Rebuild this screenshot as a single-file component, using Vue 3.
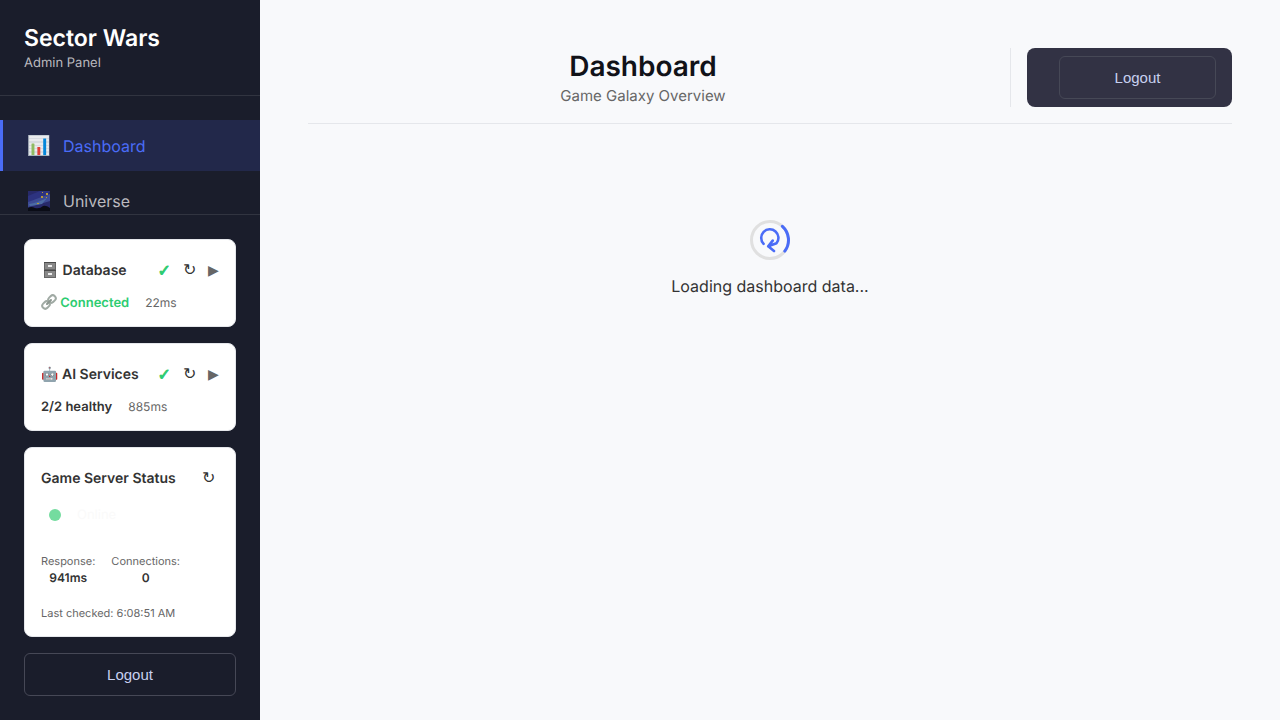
<script setup>
const navItems = [
  { icon: 'chart', label: 'Dashboard', active: true },
  { icon: 'galaxy', label: 'Universe', active: false },
]

const services = [
  { icon: 'cabinet', name: 'Database', linked: true, state: 'Connected', ok: true, time: '22ms' },
  { icon: 'robot', name: 'AI Services', linked: false, state: '2/2 healthy', ok: false, time: '885ms' },
]

const metrics = [
  { label: 'Response:', value: '941ms' },
  { label: 'Connections:', value: '0' },
]
</script>

<template>
  <div class="layout">
    <aside class="sidebar">
      <header class="brand">
        <h2>Sector Wars</h2>
        <p>Admin Panel</p>
      </header>

      <nav class="nav">
        <a v-for="item in navItems" :key="item.label" href="#" class="nav-link" :class="{ active: item.active }">
          <span class="nav-icon">
            <template v-if="item.icon === 'chart'">📊</template>
            <svg v-else class="galaxy" viewBox="0 0 22 20" aria-hidden="true">
              <rect width="22" height="20" fill="#292b70" />
              <path d="M0 5L12 0H22L17 7L0 13Z" fill="#30368a" />
              <path d="M0 11Q8 8 22 3V10Q10 14 0 16Z" fill="#4150a0" />
              <path d="M1 13Q9 12 19 7L14 13L2 15Z" fill="#5274b0" />
              <path d="M0 17Q3 15 7 17Q12 18 15 15Q18 14 22 17V20H0Z" fill="#090b14" />
              <g fill="#c9a83a">
                <rect x="13" y="5" width="2" height="2" />
                <rect x="18" y="2" width="2" height="2" />
                <rect x="9" y="12" width="2" height="1" />
                <rect x="14" y="1" width="1" height="1" />
                <rect x="18" y="6" width="1" height="1" />
              </g>
            </svg>
          </span>
          <span>{{ item.label }}</span>
        </a>
      </nav>

      <div class="footer">
        <section v-for="s in services" :key="s.name" class="card">
          <div class="card-head">
            <h4>
              <svg v-if="s.icon === 'cabinet'" class="glyph" viewBox="0 0 18 18" aria-hidden="true">
                <rect x="3" y="1" width="12" height="16" fill="#666" />
                <rect x="4" y="2" width="10" height="6" fill="#888" />
                <rect x="4" y="10" width="10" height="6" fill="#888" />
                <path d="M3 1H15V2H3ZM3 9H15V10H3Z" fill="#4b4b4b" />
                <path d="M7 4H11V6H7ZM7 12H11V14H7Z" fill="#eee" />
              </svg>
              <span v-else>🤖</span>
              {{ s.name }}
            </h4>
            <div class="actions">
              <span class="check">✓</span>
              <button class="refresh" type="button" :aria-label="'Refresh ' + s.name">↻</button>
              <button class="expand" type="button" :aria-label="'Expand ' + s.name">▶</button>
            </div>
          </div>
          <div class="card-row">
            <span class="state" :class="{ ok: s.ok }">
              <svg v-if="s.linked" class="link" viewBox="0 0 16 16" fill="none" stroke="#a0aaa4" stroke-width="2" aria-hidden="true">
                <rect x="7" y="2" width="8" height="6" rx="3" transform="rotate(-45 11 5)" />
                <rect x="1" y="8" width="8" height="6" rx="3" transform="rotate(-45 5 11)" />
                <path d="M6 10L10 6" stroke="#8b968f" stroke-linecap="round" />
              </svg>
              {{ s.state }}
            </span>
            <span class="time">{{ s.time }}</span>
          </div>
        </section>

        <section class="card">
          <div class="card-head">
            <h4>Game Server Status</h4>
            <button class="refresh server" type="button" aria-label="Refresh game server">↻</button>
          </div>
          <div class="online">
            <span class="dot"></span>
            <span>Online</span>
          </div>
          <dl class="metrics">
            <div v-for="m in metrics" :key="m.label">
              <dt>{{ m.label }}</dt>
              <dd>{{ m.value }}</dd>
            </div>
          </dl>
          <p class="checked">Last checked: 6:08:51 AM</p>
        </section>

        <button class="logout" type="button">Logout</button>
      </div>
    </aside>

    <main class="main">
      <header class="page-head">
        <div class="titles">
          <h1>Dashboard</h1>
          <p>Game Galaxy Overview</p>
        </div>
        <div class="user-area">
          <div class="user-box">
            <button class="logout" type="button">Logout</button>
          </div>
        </div>
      </header>

      <div class="loading">
        <svg class="spinner" viewBox="0 0 40 40" fill="none" stroke-linecap="round" stroke-linejoin="round" aria-hidden="true">
          <circle cx="20" cy="20" r="18.5" stroke="#e0e0e0" stroke-width="3" />
          <path d="M32.4 6.3A18.5 18.5 0 0 1 34.8 31.1" stroke="#4a6cf7" stroke-width="3" />
          <path d="M13.6 23.8A8.6 8.6 0 1 1 26.5 23.3L18.2 26.3M22.7 20.6L18.2 26.3L24 31" stroke="#4a6cf7" stroke-width="2.6" />
        </svg>
        <p>Loading dashboard data...</p>
      </div>
    </main>
  </div>
</template>

<style>
body {
  margin: 0;
  background: #f8f9fb;
}
</style>

<style scoped>
* {
  box-sizing: border-box;
}

.layout {
  display: flex;
  height: 100vh;
  font-family: Inter, "Liberation Sans", sans-serif;
  font-size: 16px;
  line-height: 24px;
  color: #333;
  text-rendering: geometricPrecision;
}

h1, h2, h4, p, dl, dd {
  margin: 0;
}

button {
  font-family: "Liberation Sans", sans-serif;
  cursor: pointer;
}

.sidebar {
  display: flex;
  flex-direction: column;
  flex: 0 0 260px;
  background: #1a1d2b;
  color: #fff;
}

.brand {
  padding: 24px 24px 20px;
  border-bottom: 1px solid #313440;
}

.brand h2 {
  font-size: 23px;
  font-weight: 600;
  line-height: 28px;
}

.brand p {
  font-size: 13px;
  line-height: 23px;
  color: #bababf;
}

.nav {
  flex: 1;
  min-height: 0;
  padding-top: 24px;
  overflow: hidden;
}

.nav-link {
  display: flex;
  align-items: center;
  gap: 12px;
  height: 51px;
  margin-bottom: 4px;
  padding: 0 24px;
  border-left: 3px solid transparent;
  color: #bababf;
  text-decoration: none;
}

.nav-link.active {
  border-left-color: #4a6cf7;
  background: #22284a;
  color: #4a6cf7;
}

.nav-icon {
  width: 24px;
  font-size: 19px;
  text-align: center;
  opacity: 0.9;
}

.galaxy {
  display: block;
  width: 22px;
  height: 20px;
  margin: 0 auto;
}

.footer {
  display: flex;
  flex-direction: column;
  gap: 16px;
  padding: 24px;
  border-top: 1px solid #313440;
}

.card {
  padding: 16px;
  border: 1px solid #e5e7eb;
  border-radius: 8px;
  background: #fff;
  color: #333;
}

.card-head {
  display: flex;
  align-items: center;
  justify-content: space-between;
  height: 28px;
}

.card-head h4 {
  padding-top: 2px;
  font-size: 14px;
  font-weight: 600;
  white-space: nowrap;
}

.glyph {
  width: 18px;
  height: 18px;
  vertical-align: -4px;
}

.actions {
  display: flex;
  align-items: center;
  gap: 8px;
}

.check {
  padding-top: 2px;
  font-family: "DejaVu Sans", sans-serif;
  font-size: 16px;
  font-weight: 700;
  color: #2ecc71;
  -webkit-text-stroke: 1px #2ecc71;
}

.refresh,
.expand {
  padding: 0;
  border: 0;
  background: none;
  color: #333;
  font-size: 16px;
}

.refresh {
  width: 20px;
  padding-bottom: 2px;
}

.refresh.server {
  margin-right: 1px;
}

.expand {
  width: 12px;
  font-size: 14px;
  color: #666;
}

.card-row {
  display: flex;
  align-items: center;
  gap: 16px;
  height: 18px;
  margin-top: 10px;
  margin-bottom: -2px;
}

.state {
  font-size: 13px;
  font-weight: 600;
}

.state.ok {
  color: #2ecc71;
}

.link {
  width: 16px;
  height: 16px;
  vertical-align: -3px;
}

.time {
  font-size: 12px;
  color: #666;
}

.online {
  display: flex;
  align-items: center;
  gap: 16px;
  height: 36px;
  margin-top: 5px;
  padding: 0 8px;
  font-size: 13px;
  color: #fafafa;
}

.dot {
  width: 12px;
  height: 12px;
  border-radius: 50%;
  background: #74dc9f;
}

.metrics {
  display: flex;
  gap: 16px;
  margin-top: 20px;
  text-align: center;
}

.metrics dt {
  font-size: 11px;
  line-height: 16px;
  color: #666;
}

.metrics dd {
  font-size: 12px;
  font-weight: 600;
  line-height: 18px;
}

.checked {
  margin-top: 19px;
  font-size: 11px;
  line-height: 14px;
  color: #666;
}

.logout {
  width: 100%;
  height: 43px;
  border: 1px solid #464856;
  border-radius: 6px;
  background: transparent;
  color: #c7d0f0;
  font-size: 15px;
}

.main {
  flex: 1;
  padding: 48px;
  background: #f8f9fb;
}

.page-head {
  display: flex;
  padding-bottom: 16px;
  border-bottom: 1px solid #e5e7eb;
}

.titles {
  flex: 1;
  padding-right: 32px;
  text-align: center;
}

.titles h1 {
  font-size: 28px;
  font-weight: 600;
  line-height: 36px;
  color: #111218;
}

.titles p {
  padding-top: 1px;
  font-size: 15px;
  line-height: 22px;
  color: #666;
}

.user-area {
  display: flex;
  padding-left: 16px;
  border-left: 1px solid #e5e7eb;
}

.user-box {
  width: 205px;
  padding: 8px 16px 8px 32px;
  border-radius: 8px;
  background: #323244;
}

.loading {
  display: flex;
  flex-direction: column;
  align-items: center;
  gap: 14px;
  padding-top: 96px;
}

.spinner {
  width: 40px;
  height: 40px;
}
</style>
